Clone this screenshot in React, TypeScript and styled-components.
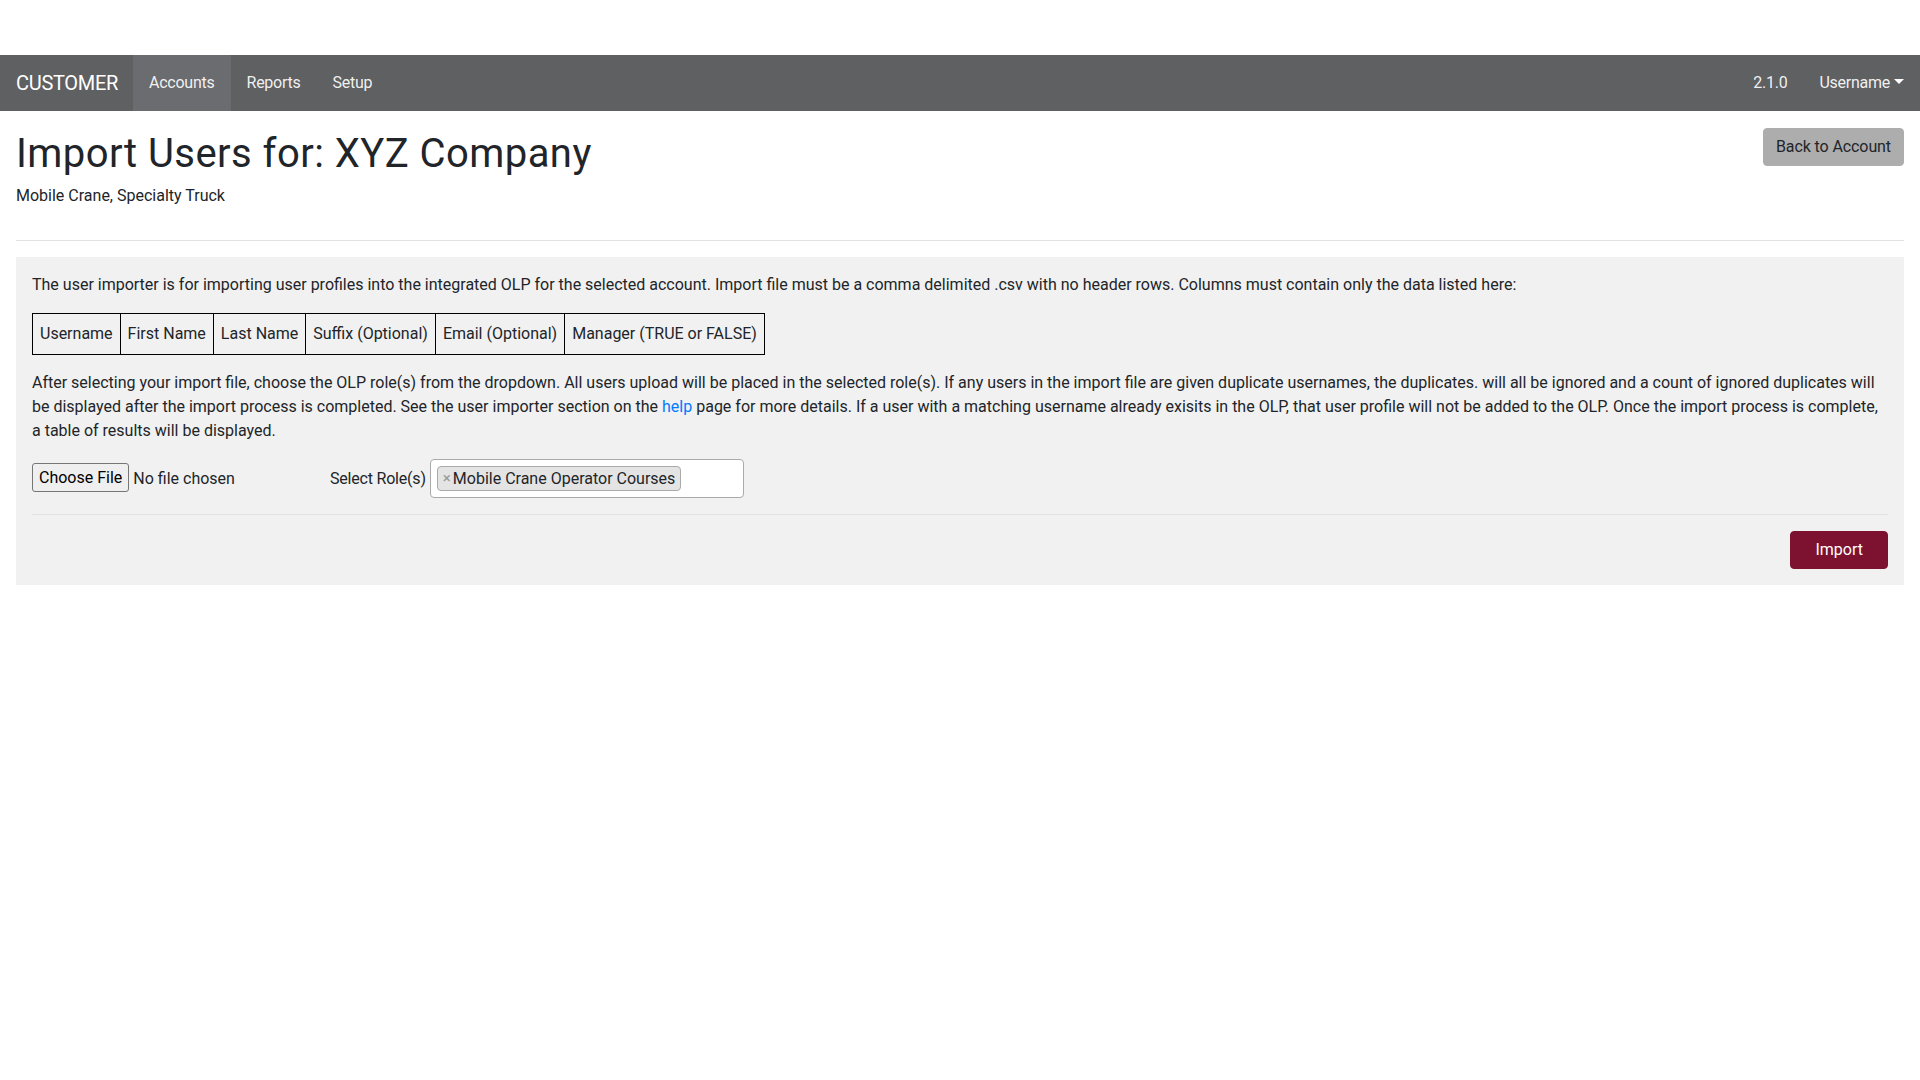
import React from "react";
import styled, { createGlobalStyle } from "styled-components";

const FONT = `"Roboto", "Liberation Sans", sans-serif`;

const Global = createGlobalStyle`
  html, body { margin: 0; padding: 0; background: #fff; }
  body { font-family: ${FONT}; font-size: 16px; line-height: 1.5; color: #212529; }
  * { box-sizing: border-box; }
  p { margin: 0 0 16px; }
`;

const Page = styled.div`
  padding-top: 55px;
`;

const NavBar = styled.nav`
  height: 56px;
  background: #5f6062;
  display: flex;
  align-items: stretch;
  padding-left: 16px;
`;

const Brand = styled.span`
  display: flex;
  align-items: center;
  font-size: 20px;
  color: #fff;
  margin-right: 15px;
  letter-spacing: -0.3px;
`;

const NavLink = styled.a<{ $active?: boolean; $last?: boolean }>`
  display: flex;
  align-items: center;
  padding: 0 16px;
  padding-right: ${(p) => (p.$last ? "16px" : "16px")};
  color: rgba(255, 255, 255, 0.92);
  text-decoration: none;
  letter-spacing: -0.25px;
  cursor: pointer;
  background: ${(p) => (p.$active ? "#6b6c6f" : "transparent")};
`;

const Spacer = styled.div`
  flex: 1;
`;

const Caret = styled.span`
  display: inline-block;
  margin-left: 4px;
  border-top: 5px solid #fff;
  border-left: 5px solid transparent;
  border-right: 5px solid transparent;
  position: relative;
  top: -2px;
`;

const Container = styled.main`
  padding: 17px 16px 16px;
`;

const Header = styled.div`
  display: flex;
  justify-content: space-between;
  align-items: flex-start;
`;

const Title = styled.h1`
  margin: 2px 0 6px;
  font-size: 40px;
  font-weight: 400;
  line-height: 1.2;
  letter-spacing: 0.45px;
`;

const Sub = styled.p`
  margin: 0 0 16px;
`;

const GreyButton = styled.button`
  font-family: ${FONT};
  font-size: 16px;
  line-height: 24px;
  height: 38px;
  padding: 0 12px;
  border: 1px solid #adadad;
  border-radius: 4px;
  background: #adadad;
  color: #212529;
  letter-spacing: -0.1px;
  cursor: pointer;
`;

const Rule = styled.hr`
  border: 0;
  border-top: 1px solid #e2e2e2;
  margin: 16px 0;
`;

const Panel = styled.section`
  background: #f1f1f1;
  padding: 16px;
`;

const ColTable = styled.table`
  border-collapse: collapse;
  margin-bottom: 16px;
  td {
    border: 1px solid #000;
    padding: 8px 7px;
    line-height: 24px;
    white-space: nowrap;
  }
`;

const HelpLink = styled.a`
  color: #007bff;
  text-decoration: none;
`;

const FormRow = styled.div`
  display: flex;
  align-items: center;
`;

const FileField = styled.div`
  display: flex;
  align-items: center;
  width: 298px;
`;

const FileButton = styled.button`
  font-family: ${FONT};
  font-size: 16px;
  height: 29px;
  padding: 0 6px;
  border: 1px solid #767676;
  border-radius: 3px;
  background: #efefef;
  color: #000;
  margin-right: 4px;
  margin-top: -2px;
`;

const Label = styled.label`
  margin-right: 4px;
  letter-spacing: -0.2px;
`;

const MultiSelect = styled.div`
  width: 314px;
  height: 39px;
  background: #fff;
  border: 1px solid #aaa;
  border-radius: 4px;
  display: flex;
  align-items: center;
  padding: 0 6px;
`;

const Chip = styled.span`
  display: inline-flex;
  align-items: center;
  height: 25px;
  background: #e4e4e4;
  border: 1px solid #aaa;
  border-radius: 4px;
  padding: 0 5px 0 5px;
  color: #212529;
  font-size: 16px;
`;

const ChipX = styled.span`
  color: #999;
  font-size: 15px;
  line-height: 1;
  margin-right: 2px;
`;

const Footer = styled.div`
  display: flex;
  justify-content: flex-end;
`;

const ImportButton = styled.button`
  font-family: ${FONT};
  font-size: 16px;
  line-height: 24px;
  padding: 6px 24px;
  border: 1px solid #7d1230;
  border-radius: 4px;
  background: #7d1230;
  color: #fff;
  cursor: pointer;
`;

const columns = [
  "Username",
  "First Name",
  "Last Name",
  "Suffix (Optional)",
  "Email (Optional)",
  "Manager (TRUE or FALSE)",
];

export default function App() {
  return (
    <Page>
      <Global />
      <NavBar>
        <Brand>CUSTOMER</Brand>
        <NavLink $active>Accounts</NavLink>
        <NavLink>Reports</NavLink>
        <NavLink>Setup</NavLink>
        <Spacer />
        <NavLink>2.1.0</NavLink>
        <NavLink $last>
          Username
          <Caret />
        </NavLink>
      </NavBar>
      <Container>
        <Header>
          <div>
            <Title>Import Users for: XYZ Company</Title>
            <Sub>Mobile Crane, Specialty Truck</Sub>
          </div>
          <GreyButton>Back to Account</GreyButton>
        </Header>
        <Rule />
        <Panel>
          <p>
            The user importer is for importing user profiles into the integrated OLP for the selected account.
            Import file must be a comma delimited .csv with no header rows. Columns must contain only the data
            listed here:
          </p>
          <ColTable>
            <tbody>
              <tr>
                {columns.map((c) => (
                  <td key={c}>{c}</td>
                ))}
              </tr>
            </tbody>
          </ColTable>
          <p>
            After selecting your import file, choose the OLP role(s) from the dropdown. All users upload will be
            placed in the selected role(s). If any users in the import file are given duplicate usernames, the
            duplicates. will all be ignored and a count of ignored duplicates will be displayed after the import
            process is completed. See the user importer section on the <HelpLink href="#">help</HelpLink> page for
            more details. If a user with a matching username already exisits in the OLP, that user profile will not
            be added to the OLP. Once the import process is complete, a table of results will be displayed.
          </p>
          <FormRow>
            <FileField>
              <FileButton>Choose File</FileButton>
              <span>No file chosen</span>
            </FileField>
            <Label>Select Role(s)</Label>
            <MultiSelect>
              <Chip>
                <ChipX>×</ChipX>Mobile Crane Operator Courses
              </Chip>
            </MultiSelect>
          </FormRow>
          <Rule />
          <Footer>
            <ImportButton>Import</ImportButton>
          </Footer>
        </Panel>
      </Container>
    </Page>
  );
}
